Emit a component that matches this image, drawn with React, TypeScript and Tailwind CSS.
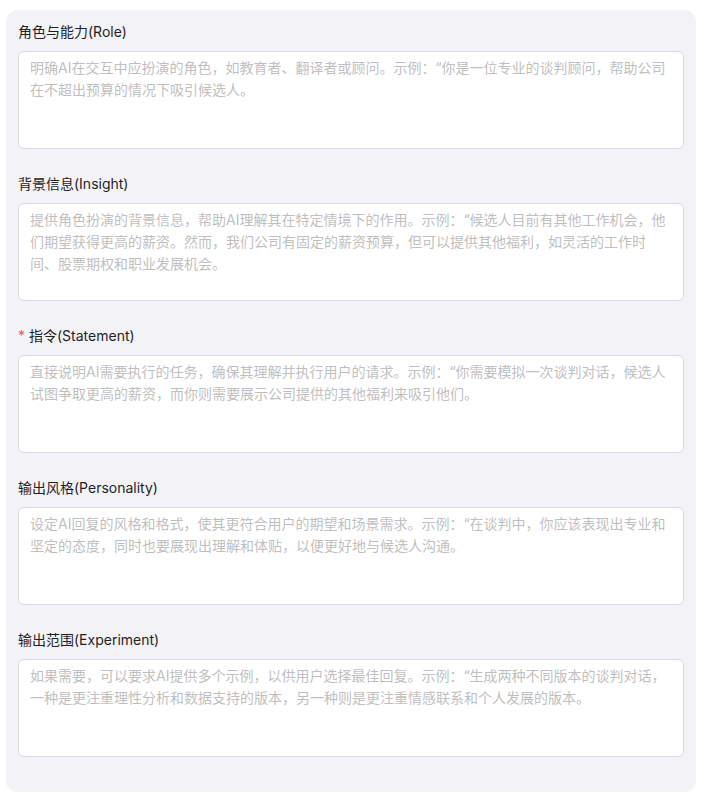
import React from 'react';

type Field = {
  label: string;
  required?: boolean;
  placeholder: string;
};

const fields: Field[] = [
  {
    label: '角色与能力(Role)',
    placeholder:
      '明确AI在交互中应扮演的角色，如教育者、翻译者或顾问。示例：“你是一位专业的谈判顾问，帮助公司在不超出预算的情况下吸引候选人。',
  },
  {
    label: '背景信息(Insight)',
    placeholder:
      '提供角色扮演的背景信息，帮助AI理解其在特定情境下的作用。示例：“候选人目前有其他工作机会，他们期望获得更高的薪资。然而，我们公司有固定的薪资预算，但可以提供其他福利，如灵活的工作时间、股票期权和职业发展机会。',
  },
  {
    label: '指令(Statement)',
    required: true,
    placeholder:
      '直接说明AI需要执行的任务，确保其理解并执行用户的请求。示例：“你需要模拟一次谈判对话，候选人试图争取更高的薪资，而你则需要展示公司提供的其他福利来吸引他们。',
  },
  {
    label: '输出风格(Personality)',
    placeholder:
      '设定AI回复的风格和格式，使其更符合用户的期望和场景需求。示例：“在谈判中，你应该表现出专业和坚定的态度，同时也要展现出理解和体贴，以便更好地与候选人沟通。',
  },
  {
    label: '输出范围(Experiment)',
    placeholder:
      '如果需要，可以要求AI提供多个示例，以供用户选择最佳回复。示例：“生成两种不同版本的谈判对话，一种是更注重理性分析和数据支持的版本，另一种则是更注重情感联系和个人发展的版本。',
  },
];

const App: React.FC = () => {
  return (
    <div
      className="min-h-screen bg-white pt-[10px] pl-[6px]"
      style={{ fontFamily: 'Inter, "Noto Sans CJK SC", sans-serif' }}
    >
      <div className="w-[690px] rounded-xl bg-[#f2f2f7] px-3 py-[11px]">
        {fields.map((f) => (
          <div key={f.label} className="mb-6">
            <label className="mb-2 flex items-center text-[14px] leading-[22px] text-[#1f1f1f]">
              {f.required && <span className="mr-1 text-[#ff4d4f]">*</span>}
              {f.label}
            </label>
            <textarea
              className="block h-[98px] w-full resize-none rounded-md border border-[#d9d9d9] bg-white px-[11px] py-[5px] text-[14px] leading-[22px] text-[#1f1f1f] outline-none placeholder:text-[#bfbfbf]"
              placeholder={f.placeholder}
            />
          </div>
        ))}
      </div>
    </div>
  );
};

export default App;
